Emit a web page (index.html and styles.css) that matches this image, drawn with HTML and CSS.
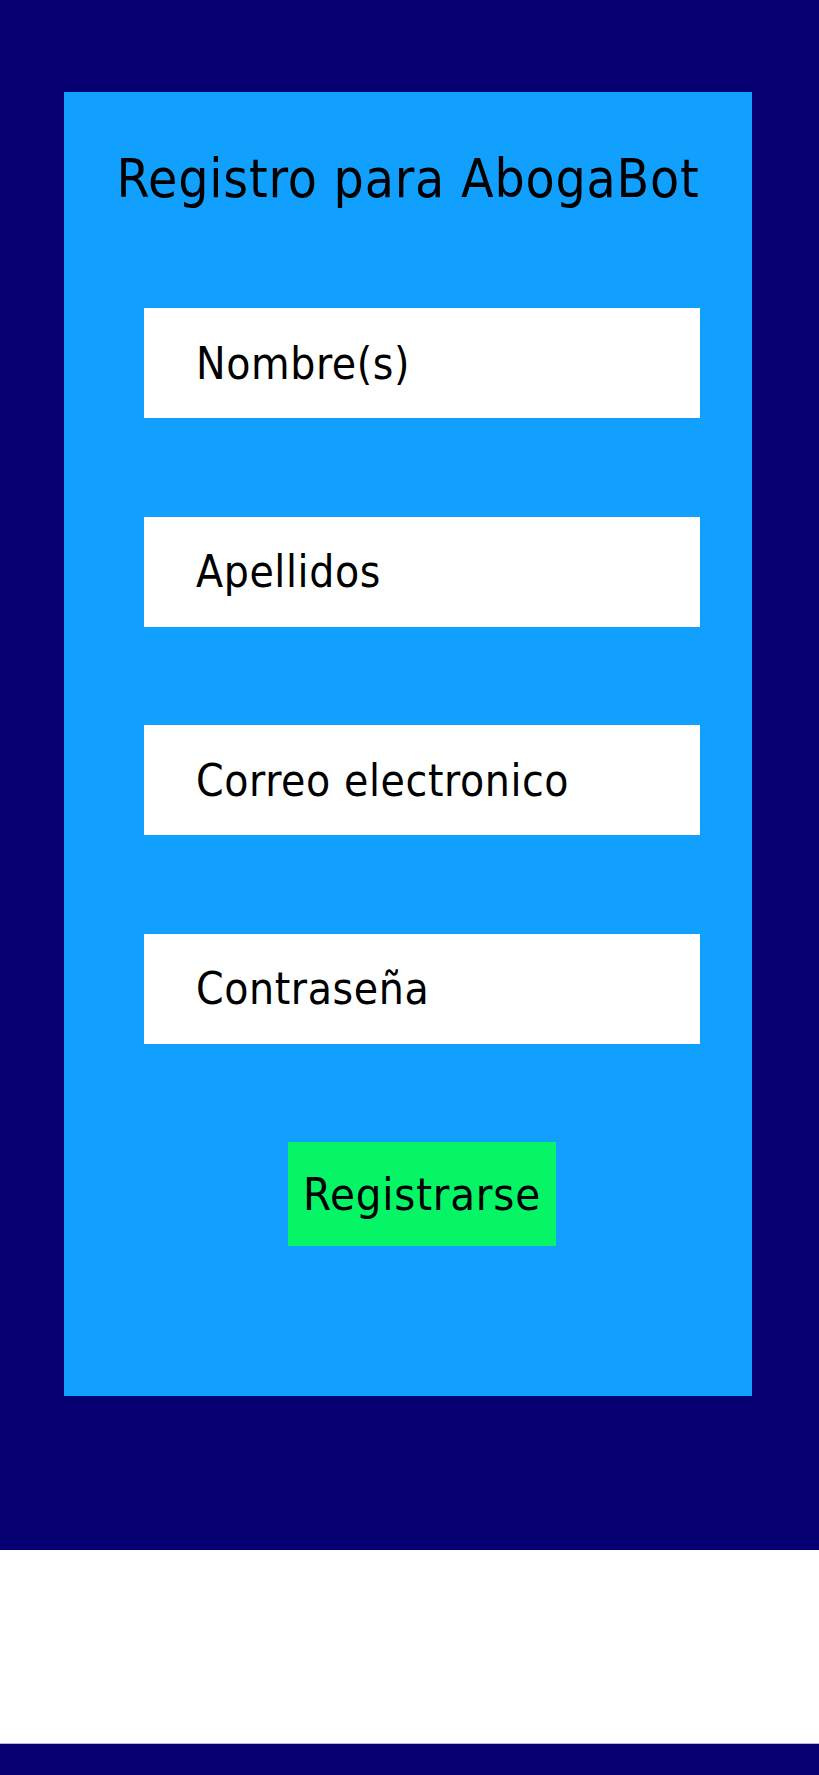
FILE: index.html
```html
<!DOCTYPE html>
<html lang="es">
<head>
<meta charset="utf-8">
<title>Registro para AbogaBot</title>
<link rel="stylesheet" href="styles.css">
</head>
<body>
<main class="page">
  <section class="card">
    <h1 class="title">Registro para AbogaBot</h1>
    <form class="form">
      <div class="field">Nombre(s)</div>
      <div class="field">Apellidos</div>
      <div class="field">Correo electronico</div>
      <div class="field">Contraseña</div>
      <div class="actions"><button type="button" class="btn">Registrarse</button></div>
    </form>
  </section>
</main>
<div class="spacer"></div>
<footer class="footer"></footer>
</body>
</html>
```

FILE: styles.css
```css
* { box-sizing: border-box; }
html, body { margin: 0; padding: 0; }
body {
  font-family: "DejaVu Sans Condensed", "DejaVu Sans", sans-serif;
  color: #000;
  background: #fff;
}
.page {
  height: 1550px;
  background: #060073;
  padding: 92px 67px 0 64px;
}
.card {
  width: 688px;
  height: 1304px;
  background: #12a0ff;
  padding-top: 57px;
  display: flex;
  flex-direction: column;
}
.title {
  margin: 0;
  font-size: 53px;
  font-weight: normal;
  letter-spacing: 0.8px;
  line-height: 60px;
  height: 60px;
  text-align: center;
  white-space: nowrap;
}
.form {
  margin-top: 99px;
  padding-left: 80px;
  padding-right: 52px;
  display: flex;
  flex-direction: column;
  gap: 98.5px;
}
.field {
  height: 110px;
  background: #fff;
  display: flex;
  align-items: center;
  padding-left: 52px;
  font-size: 44px;
  letter-spacing: 0.6px;
}
.actions {
  display: flex;
  justify-content: center;
}
.btn {
  width: 268px;
  height: 104px;
  background: #06f566;
  border: none;
  padding: 0;
  font-family: inherit;
  font-size: 45px;
  letter-spacing: 0.8px;
  color: #000;
}
.spacer {
  height: 193px;
  background: #fff;
  border-bottom: 1px solid #b8b4d8;
  box-sizing: content-box;
}
.footer {
  height: 31px;
  background: #060073;
}
```
